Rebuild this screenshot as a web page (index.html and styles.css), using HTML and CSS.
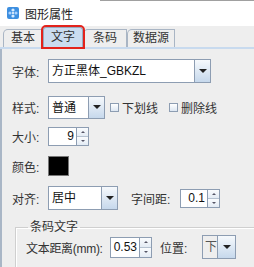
FILE: index.html
```html
<!DOCTYPE html>
<html lang="zh">
<head>
    <meta charset="UTF-8">
    <title>图形属性</title>
    <link rel="stylesheet" href="styles.css">
</head>
<body>
    <div class="window">
        <div class="titlebar">
            <svg class="app-icon" width="12" height="12" viewBox="0 0 12 12">
                <rect x="0" y="0" width="12" height="12" rx="2" fill="#3d8fe0"/>
                <circle cx="6" cy="3" r="1.6" fill="#d8ecff"/>
                <circle cx="3" cy="6" r="1.6" fill="#a9d2ff"/>
                <circle cx="9" cy="6" r="1.6" fill="#a9d2ff"/>
                <circle cx="6" cy="9" r="1.6" fill="#d8ecff"/>
                <circle cx="6" cy="6" r="1" fill="#ffffff"/>
            </svg>
            <span class="title">图形属性</span>
        </div>

        <div class="tabs">
            <div class="tab tab-first">基本</div>
            <div class="tab tab-active">文字</div>
            <div class="tab tab-third">条码</div>
            <div class="tab tab-last">数据源</div>
        </div>

        <div class="panel">
            <div class="row row-font">
                <span class="label">字体:</span>
                <div class="combo combo-font">
                    <span class="combo-text">方正黑体_GBKZL</span>
                    <span class="combo-btn"><i class="arrow"></i></span>
                </div>
            </div>

            <div class="row row-style">
                <span class="label">样式:</span>
                <div class="combo combo-style">
                    <span class="combo-text">普通</span>
                    <span class="combo-btn"><i class="arrow"></i></span>
                </div>
                <span class="check check-first"></span>
                <span class="check-label">下划线</span>
                <span class="check check-second"></span>
                <span class="check-label">删除线</span>
            </div>

            <div class="row row-size">
                <span class="label">大小:</span>
                <div class="spinner spinner-size">
                    <span class="spin-text">9</span>
                    <span class="spin-btns">
                        <span class="spin-up"><i class="tri-up"></i></span>
                        <span class="spin-down"><i class="tri-down"></i></span>
                    </span>
                </div>
            </div>

            <div class="row row-color">
                <span class="label">颜色:</span>
                <span class="swatch"></span>
            </div>

            <div class="row row-align">
                <span class="label">对齐:</span>
                <div class="combo combo-align">
                    <span class="combo-text">居中</span>
                    <span class="combo-btn"><i class="arrow"></i></span>
                </div>
                <span class="label-inline spacing-label">字间距:</span>
                <div class="spinner spinner-spacing">
                    <span class="spin-text">0.1</span>
                    <span class="spin-btns">
                        <span class="spin-up"><i class="tri-up"></i></span>
                        <span class="spin-down"><i class="tri-down"></i></span>
                    </span>
                </div>
            </div>

            <fieldset class="group">
                <legend>条码文字</legend>
                <div class="row row-barcode">
                    <span class="label-inline distance-label">文本距离(mm):</span>
                    <div class="spinner spinner-distance">
                        <span class="spin-text">0.53</span>
                        <span class="spin-btns">
                            <span class="spin-up"><i class="tri-up"></i></span>
                            <span class="spin-down"><i class="tri-down"></i></span>
                        </span>
                    </div>
                    <span class="label-inline pos-label">位置:</span>
                    <div class="combo combo-pos">
                        <span class="combo-text">下</span>
                        <span class="combo-btn"><i class="arrow"></i></span>
                    </div>
                </div>
            </fieldset>
        </div>
    </div>
</body>
</html>
```

FILE: styles.css
```css
* {
    margin: 0;
    padding: 0;
    box-sizing: border-box;
}

body {
    font-family: 'Liberation Sans', 'Noto Sans CJK SC', sans-serif;
    font-size: 12px;
    color: #333;
    background: #eeeeee;
    width: 254px;
    height: 267px;
    overflow: hidden;
}

.window {
    width: 254px;
    height: 267px;
    display: flex;
    flex-direction: column;
}

/* title bar */
.titlebar {
    flex-shrink: 0;
    height: 26px;
    background: linear-gradient(to right, #ffffff 100px, #a0a0a0 100px) top / 100% 1px no-repeat, #ffffff;
    display: flex;
    align-items: center;
    padding-left: 7px;
}

.app-icon {
    margin-right: 6px;
}

.title {
    color: #222;
    font-size: 12px;
}

/* tabs */
.tabs {
    flex-shrink: 0;
    display: flex;
    align-items: flex-end;
    height: 23px;
    padding-left: 3px;
    border-bottom: 2px solid #c8daee;
}

.tab {
    height: 18px;
    line-height: 17px;
    text-align: center;
    color: #333;
    background: #eeeeee;
    border: 1px solid #a9b5c4;
    border-bottom: none;
    border-top-left-radius: 5px;
}

.tab-first {
    width: 40px;
}

.tab-active {
    width: 40px;
    height: 20px;
    line-height: 19px;
    background: #cadcf0;
    border-color: #98a9bd;
    outline: 2px solid #e3231c;
    outline-offset: 0;
    border-radius: 3px 3px 0 0;
    position: relative;
    z-index: 1;
}

.tab-third {
    width: 44px;
}

.tab-last {
    width: 48px;
}

/* content panel */
.panel {
    flex: 1;
    min-height: 0;
    overflow: hidden;
    border-left: 2px solid #a9b6c6;
    padding: 7px 0 0 10px;
}

.row {
    display: flex;
    align-items: center;
    height: 30px;
}

.row-style {
    margin-top: 6px;
}

.row-size {
    height: 29px;
}

.row-align {
    margin-top: 2px;
}

.row-barcode {
    margin-top: -4px;
}

.label {
    width: 36px;
    flex-shrink: 0;
}

.label-inline {
    flex-shrink: 0;
    white-space: nowrap;
}

/* combo boxes */
.combo {
    display: flex;
    flex-shrink: 0;
    height: 24px;
    background: #ffffff;
    border: 1px solid #8d9db2;
}

.combo-text {
    flex: 1;
    padding-left: 3px;
    line-height: 22px;
    color: #111;
    white-space: nowrap;
}

.combo-btn {
    width: 16px;
    flex-shrink: 0;
    border-left: 1px solid #8d9db2;
    background: linear-gradient(#f6f9fc, #c6d8ec);
    display: flex;
    align-items: center;
    justify-content: center;
}

.arrow {
    width: 0;
    height: 0;
    border-left: 4px solid transparent;
    border-right: 4px solid transparent;
    border-top: 4px solid #222;
}

.combo-font {
    width: 163px;
}

.combo-style {
    width: 57px;
    height: 23px;
}

.combo-align {
    width: 70px;
}

.combo-pos {
    width: 34px;
}

.combo-pos .combo-text {
    background: #eeeeee;
    color: #555;
    padding-left: 2px;
}

.combo-pos .combo-btn {
    width: 18px;
}

/* check boxes */
.check {
    width: 9px;
    height: 9px;
    border: 1px solid #8d9db2;
    background: linear-gradient(#ffffff, #dde7f2);
    margin-right: 3px;
}

.check-first {
    margin-left: 5px;
}

.check-second {
    margin-left: 11px;
}

.check-label {
    color: #333;
}

/* spinners */
.spinner {
    display: flex;
    flex-shrink: 0;
    height: 19px;
    background: #ffffff;
    border: 1px solid #8d9db2;
}

.spin-text {
    flex: 1;
    text-align: right;
    padding-right: 2px;
    line-height: 17px;
    color: #111;
}

.spin-btns {
    width: 12px;
    border-left: 1px solid #8d9db2;
    display: flex;
    flex-direction: column;
}

.spin-up,
.spin-down {
    flex: 1;
    display: flex;
    align-items: center;
    justify-content: center;
    background: linear-gradient(#fafcfe, #e3ebf4);
}

.spin-up {
    border-bottom: 1px solid #b4c1d0;
}

.tri-up {
    border-left: 2px solid transparent;
    border-right: 2px solid transparent;
    border-bottom: 2px solid #556;
}

.tri-down {
    border-left: 2px solid transparent;
    border-right: 2px solid transparent;
    border-top: 2px solid #556;
}

.spinner-size {
    width: 41px;
}

.spacing-label {
    width: 49px;
    margin-left: 13px;
}

.spinner-spacing {
    width: 40px;
}

.distance-label {
    width: 84px;
    letter-spacing: -0.3px;
}

.spinner-distance {
    width: 42px;
    height: 21px;
}

.spinner-distance .spin-text {
    line-height: 19px;
}

.pos-label {
    width: 42px;
    margin-left: 8px;
}

/* colour swatch */
.swatch {
    width: 21px;
    height: 20px;
    background: #000000;
    border: 1px solid #777777;
}

/* barcode text group */
.group {
    margin: 6px 0 0 3px;
    border: 1px solid #cfcfcf;
    border-right: none;
    border-bottom: none;
    box-shadow: inset 1px 1px 0 #ffffff;
    padding: 0 0 0 10px;
    height: 60px;
}

.group legend {
    margin-left: 2px;
    padding: 0 2px;
    line-height: 17px;
    color: #333;
}
```
